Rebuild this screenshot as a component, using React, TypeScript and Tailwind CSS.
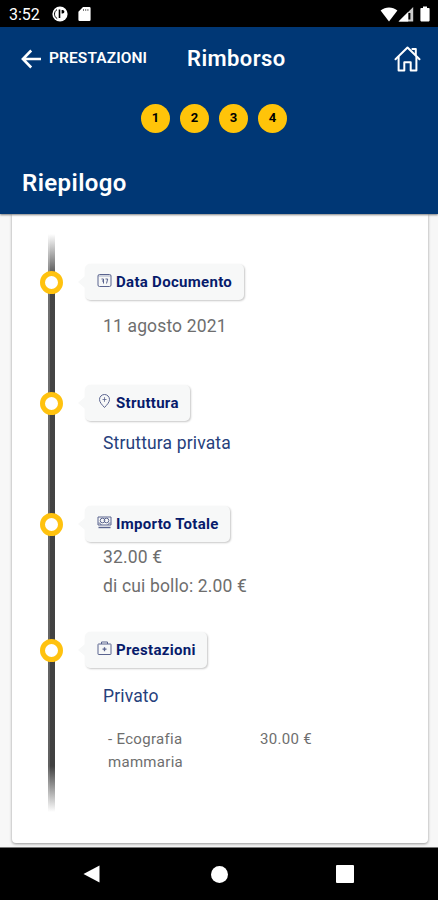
import type { ReactNode } from "react";

function StatusBar() {
  return (
    <div className="flex h-[27px] items-center bg-black pl-[9px] pr-[8px] pt-px text-white">
      <span className="w-[43px] pt-px text-[16px] leading-none">3:52</span>
      <svg className="h-4 w-4" viewBox="0 0 16 16">
        <circle cx="8" cy="8" r="7.6" fill="#fff" />
        <path d="M7.500 3.500v8.500" stroke="#000" strokeWidth="1.600" />
        <path d="M9.600 4h1a1.800 1.800 0 0 1 0 3.600h-1z" fill="#000" />
        <path d="M5 3.600a5.200 5.200 0 0 0 .2 9" fill="none" stroke="#000" strokeWidth="1" />
      </svg>
      <svg className="ml-[10px] h-4 w-[13px]" viewBox="0 0 13 16">
        <path d="M5 1h6.400a1.200 1.200 0 0 1 1.200 1.200v11.600a1.200 1.200 0 0 1-1.200 1.200H1.600a1.200 1.200 0 0 1-1.200-1.200V5.800z" fill="#fff" />
        <path d="M5.500 3v2M7.700 3v2M9.900 3v2" stroke="#777" strokeWidth="1" />
      </svg>
      <svg className="ml-auto h-[15px] w-[18px]" viewBox="0 0 18 15">
        <path d="M.6 3.600C5.500-.4 12.500-.4 17.400 3.600L9 14.400z" fill="#fff" />
      </svg>
      <svg className="h-[15px] w-[16px]" viewBox="0 0 16 15">
        <path d="M15.200 0v14.600H.6z" fill="#ccc" />
        <path d="M10.200 5v9.600H.6z" fill="#fff" />
        <path d="M11.400 6v6.500" stroke="#000" strokeWidth="2" />
      </svg>
      <svg className="ml-[6px] h-[16px] w-[10px]" viewBox="0 0 10 16">
        <path d="M3 .6h4v1.300h1.800a.8.8 0 0 1 .8.8v11.900a.8.8 0 0 1-.8.8H1.200a.8.8 0 0 1-.8-.8V2.700a.8.8 0 0 1 .8-.8H3z" fill="#fff" />
      </svg>
    </div>
  );
}

function Header() {
  return (
    <header className="relative z-10 h-[187px] bg-[#003775] text-white shadow-[0_1px_2px_rgba(0,0,0,0.5)]">
      <div className="grid h-[63px] grid-cols-[188px_1fr_auto] items-center pl-[22px] pr-[17px]">
        <div className="-ml-px flex items-center">
          <svg className="h-5 w-5" viewBox="0 0 20 20" fill="none" stroke="#fff" strokeWidth="2.600">
            <path d="M20 10H2.500M10.200 1.500 1.900 10l8.300 8.500" />
          </svg>
          <span className="ml-[8px] text-[15.500px] font-semibold tracking-[0.1px]">PRESTAZIONI</span>
        </div>
        <h1 className="-ml-[23px] text-[22px] font-semibold tracking-[0.4px]">Rimborso</h1>
        <svg className="h-[26px] w-[27px]" viewBox="0 0 27 26" fill="none" stroke="#fff" strokeWidth="2" strokeLinejoin="round" strokeLinecap="round">
          <path d="M1.500 13.200 13.500 1.500l12 11.700" />
          <path d="M4.600 11v13.500h5.700v-8.300h6.400v8.300h5.700V11" />
          <path d="M18.400 3h3.400v5.800" />
        </svg>
      </div>
      <div className="mt-[14px] flex justify-center gap-[10px] pr-[10px]">
        {[1, 2, 3, 4].map((step) => (
          <div
            key={step}
            className="flex h-[29px] w-[29px] items-center justify-center rounded-full bg-[#ffc409] pb-px text-[13px] font-bold text-black"
          >
            {step}
          </div>
        ))}
      </div>
      <h2 className="ml-[22px] mt-[32px] text-[24px] font-semibold leading-[36px] tracking-[0.4px]">Riepilogo</h2>
    </header>
  );
}

const stroke = {
  className: "h-[15px] w-[15px]",
  viewBox: "0 0 15 15",
  fill: "none",
  stroke: "#5a648f",
  strokeWidth: 1,
};

const CalendarIcon = () => (
  <svg {...stroke}>
    <rect x="1" y="1.500" width="13" height="12" rx="1.500" />
    <path d="M1.500 3h12" strokeOpacity="0.500" />
    <path d="M4.500 6h2v4.500M6.500 8H5M8.500 6h2.200L9.500 10.500" />
  </svg>
);

const PinIcon = () => (
  <svg {...stroke}>
    <path d="M7.500 13.500C5 10.800 2.500 8.200 2.500 5.500a5 5 0 0 1 10 0c0 2.700-2.500 5.300-5 8z" />
    <path d="M7.500 3.200v4.600M5.500 5.500h4" strokeOpacity="0.800" />
  </svg>
);

const CashIcon = () => (
  <svg {...stroke}>
    <path d="M1 2h13v8H1z" />
    <path d="M1.500 12.500h12" strokeWidth="1.400" />
    <path d="M1.500 8c1.500 0 2.500.8 2.500 2M13.500 8c-1.500 0-2.500.8-2.500 2" />
    <circle cx="5.500" cy="5.500" r="2.300" />
    <circle cx="9.500" cy="5.500" r="2.300" />
  </svg>
);

const MedicalIcon = () => (
  <svg {...stroke}>
    <rect x="1" y="3" width="13" height="10.500" rx="0.500" />
    <path d="M4.500 3V1h6v2" />
    <path d="M7.500 6.200v4M5.500 8.200h4" strokeWidth="1.300" />
  </svg>
);

interface EntryProps {
  icon: ReactNode;
  title: string;
  width: string;
  height: string;
  children: ReactNode;
}

function Entry({ icon, title, width, height, children }: EntryProps) {
  return (
    <div className={`relative flex ${height}`}>
      <div className="mt-[7px] h-[23px] w-[23px] shrink-0 rounded-full border-[5px] border-[#ffc20f] bg-white" />
      <div className="ml-[22px] min-w-0 flex-1">
        <div
          className={`relative flex h-[36px] items-center rounded-[5px] bg-[#f7f8f8] pl-[12px] shadow-[1px_1px_2px_rgba(0,0,0,0.22)] ${width}`}
        >
          <div className="absolute -left-[7px] top-[12px] border-y-[6px] border-r-[7px] border-y-transparent border-r-[#f7f8f8]" />
          <div className="mb-[3px]">{icon}</div>
          <span className="ml-[4px] whitespace-nowrap text-[15px] font-bold tracking-[0.3px] text-[#071b6b]">{title}</span>
        </div>
        <div className="ml-[18px] pt-px text-[17.500px] leading-[29px] tracking-[0.15px] text-[#6e6e6e]">{children}</div>
      </div>
    </div>
  );
}

function NavBar() {
  return (
    <div className="relative z-10 flex h-[52px] items-center bg-black pl-[83px] text-white">
      <svg className="h-[18px] w-[17px]" viewBox="0 0 17 18">
        <path d="M16.500.5v17L.5 9z" fill="#fff" />
      </svg>
      <div className="ml-[111px] h-[17px] w-[17px] rounded-full bg-white" />
      <div className="ml-[108px] h-[18px] w-[18px] rounded-[1px] bg-white" />
    </div>
  );
}

export default function App() {
  return (
    <div className="flex h-[900px] w-[438px] flex-col overflow-hidden bg-[#f7f7f7] font-['Roboto',sans-serif]">
      <StatusBar />
      <Header />
      <main className="min-h-0 flex-1 border-b border-[#777] pl-[12px] pr-[10px]">
        <div className="relative h-[629px] rounded-b-[4px] bg-white pl-[28px] pt-[50px] shadow-[0_1px_3px_rgba(0,0,0,0.4)]">
          <div className="absolute left-[36px] top-[20px] flex h-[578px] w-[7px]">
            <div className="w-[2px] bg-[linear-gradient(to_bottom,transparent,#707070_44px,#606060_532px,transparent)]" />
            <div className="w-[5px] bg-[linear-gradient(to_bottom,transparent,#454545_44px,#404040_532px,transparent)]" />
          </div>
          <Entry icon={<CalendarIcon />} title="Data Documento" width="w-[159px]" height="h-[121px]">
            <p className="mt-[11px]">11 agosto 2021</p>
          </Entry>
          <Entry icon={<PinIcon />} title="Struttura" width="w-[105px]" height="h-[121px]">
            <p className="mt-[7px] text-[#26407c]">Struttura privata</p>
          </Entry>
          <Entry icon={<CashIcon />} title="Importo Totale" width="w-[145px]" height="h-[126px]">
            <p>32.00 €</p>
            <p>di cui bollo: 2.00 €</p>
          </Entry>
          <Entry icon={<MedicalIcon />} title="Prestazioni" width="w-[122px]" height="h-[170px]">
            <p className="mt-[13px] text-[#26407c]">Privato</p>
            <div className="ml-[5px] mt-[17px] grid grid-cols-[152px_1fr] text-[15px] leading-[23px] tracking-[0.3px]">
              <span>
                - Ecografia
                <br />
                mammaria
              </span>
              <span>30.00 €</span>
            </div>
          </Entry>
        </div>
      </main>
      <NavBar />
    </div>
  );
}
